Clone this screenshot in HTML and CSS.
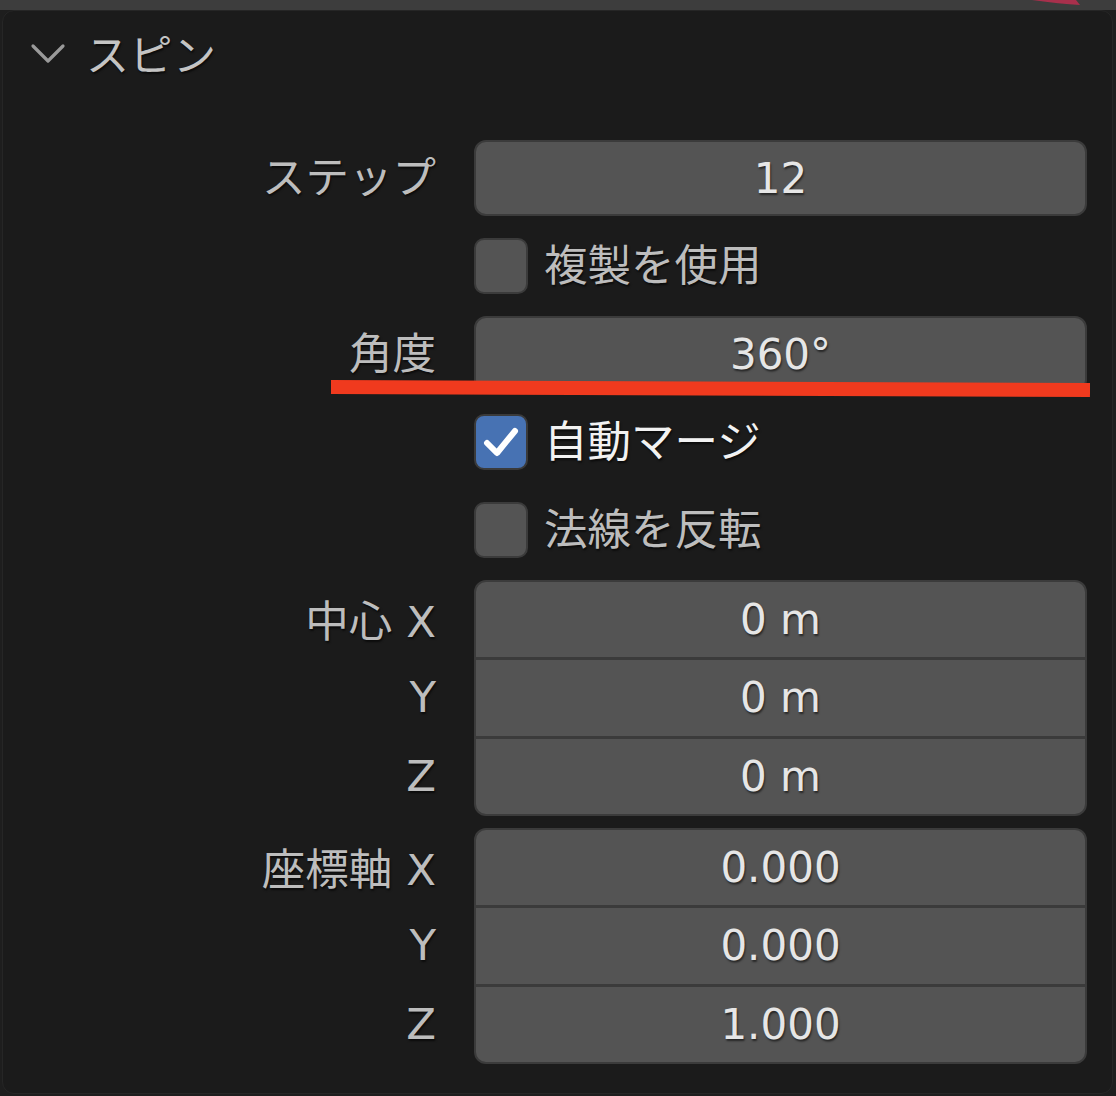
FILE: index.html
```html
<!DOCTYPE html>
<html lang="ja">
<head>
  <meta charset="UTF-8">
  <title>スピン</title>
  <link rel="stylesheet" href="styles.css">
</head>
<body>
  <div class="topbar">
    <svg class="swoosh" width="60" height="8" viewBox="0 0 60 8">
      <path d="M0 0 L44 0 L48 5 Q28 4 0 0 Z" fill="#a8304c"/>
    </svg>
  </div>

  <div class="panel">
    <!-- panel header -->
    <div class="panel-header">
      <svg class="chevron" width="36" height="24" viewBox="0 0 36 24">
        <path d="M3 4 L18 19 L33 4" fill="none" stroke="#9a9a9a" stroke-width="3.2" stroke-linecap="round" stroke-linejoin="round"/>
      </svg>
      <span class="panel-title">スピン</span>
    </div>

    <div class="rows">
      <div class="row">
        <div class="label">ステップ</div>
        <div class="field">12</div>
      </div>

      <div class="row">
        <div class="label"></div>
        <div class="check">
          <span class="box"></span>
          <span class="check-text">複製を使用</span>
        </div>
      </div>

      <div class="row angle-row">
        <div class="label">角度</div>
        <div class="field">360°</div>
        <div class="underline"></div>
      </div>

      <div class="row">
        <div class="label"></div>
        <div class="check checked">
          <span class="box">
            <svg width="50" height="52" viewBox="0 0 50 52">
              <path d="M11 27 L21 37 L39 15" fill="none" stroke="#ffffff" stroke-width="6" stroke-linecap="round" stroke-linejoin="round"/>
            </svg>
          </span>
          <span class="check-text">自動マージ</span>
        </div>
      </div>

      <div class="row">
        <div class="label"></div>
        <div class="check">
          <span class="box"></span>
          <span class="check-text">法線を反転</span>
        </div>
      </div>

      <div class="row group">
        <div class="labels">
          <div class="label">中心 X</div>
          <div class="label">Y</div>
          <div class="label">Z</div>
        </div>
        <div class="stack">
          <div class="seg">0 m</div>
          <div class="seg">0 m</div>
          <div class="seg">0 m</div>
        </div>
      </div>

      <div class="row group">
        <div class="labels">
          <div class="label">座標軸 X</div>
          <div class="label">Y</div>
          <div class="label">Z</div>
        </div>
        <div class="stack">
          <div class="seg">0.000</div>
          <div class="seg">0.000</div>
          <div class="seg">1.000</div>
        </div>
      </div>
    </div>
  </div>
</body>
</html>
```

FILE: styles.css
```css
body {
  margin: 0;
  background-color: #1e1e1e;
  font-family: "DejaVu Sans", "Noto Sans CJK JP", sans-serif;
  font-size: 42px;
  color: #bdbdbd;
  width: 1116px;
  height: 1096px;
  overflow: hidden;
}

.topbar {
  position: relative;
  height: 10px;
  background-color: #3d3d3d;
}

.swoosh {
  position: absolute;
  left: 1032px;
  top: 0;
}

.panel {
  margin: 0 3px 0 2px;
  height: 1084px;
  box-sizing: border-box;
  background-color: #1b1b1b;
  border: 1px solid #262626;
  border-radius: 12px;
}

.panel-header {
  display: flex;
  align-items: center;
  height: 89px;
  padding-left: 27px;
  padding-bottom: 8px;
  box-sizing: border-box;
}

.chevron {
  margin-right: 20px;
  margin-top: 4px;
}

.panel-title {
  color: #c4c4c4;
  font-size: 43px;
  letter-spacing: 0.5px;
  text-shadow: 1px 2px 2px rgba(0, 0, 0, 0.6);
}

.rows {
  display: flex;
  flex-direction: column;
  gap: 12px;
  padding-top: 40px;
}

.row {
  display: grid;
  grid-template-columns: 433px 613px;
  column-gap: 38px;
  height: 76px;
}

.label {
  font-size: 43.5px;
  text-align: right;
  align-self: center;
  white-space: nowrap;
  padding-bottom: 8px;
  text-shadow: 1px 2px 2px rgba(0, 0, 0, 0.6);
}

.field {
  box-sizing: border-box;
  height: 76px;
  background-color: #545454;
  border: 2px solid #3b3b3b;
  border-radius: 12px;
  display: flex;
  align-items: center;
  justify-content: center;
  color: #e6e6e6;
  text-shadow: 1px 2px 2px rgba(0, 0, 0, 0.55);
}

.check {
  display: flex;
  align-items: center;
  gap: 16px;
}

.box {
  box-sizing: border-box;
  width: 54px;
  height: 56px;
  background-color: #545454;
  border: 2px solid #3b3b3b;
  border-radius: 10px;
  display: flex;
  align-items: center;
  justify-content: center;
}

.checked .box {
  background-color: #4772b3;
  border-color: #3a3a3a;
}

.check-text {
  font-size: 43.5px;
  color: #bdbdbd;
  padding-bottom: 8px;
  text-shadow: 1px 2px 2px rgba(0, 0, 0, 0.6);
}

.checked .check-text {
  color: #f2f2f2;
}

.angle-row {
  position: relative;
}

/* annotation over the angle field */
.underline {
  position: absolute;
  left: 328px;
  top: 64px;
  width: 759px;
  height: 14px;
  background-color: #f03a1e;
  transform: rotate(0.23deg);
  transform-origin: left center;
}

.row.group {
  height: 236px;
}

.labels {
  display: flex;
  flex-direction: column;
}

.labels .label {
  flex: 1;
  align-self: stretch;
  display: flex;
  align-items: center;
  justify-content: flex-end;
  box-sizing: border-box;
  padding-bottom: 2px;
}

.stack {
  box-sizing: border-box;
  height: 236px;
  background-color: #545454;
  border: 2px solid #3b3b3b;
  border-radius: 12px;
  display: flex;
  flex-direction: column;
  overflow: hidden;
}

.seg {
  flex: 1;
  display: flex;
  align-items: center;
  justify-content: center;
  color: #e6e6e6;
  text-shadow: 1px 2px 2px rgba(0, 0, 0, 0.55);
}

.seg + .seg {
  border-top: 3px solid #3b3b3b;
}
```
